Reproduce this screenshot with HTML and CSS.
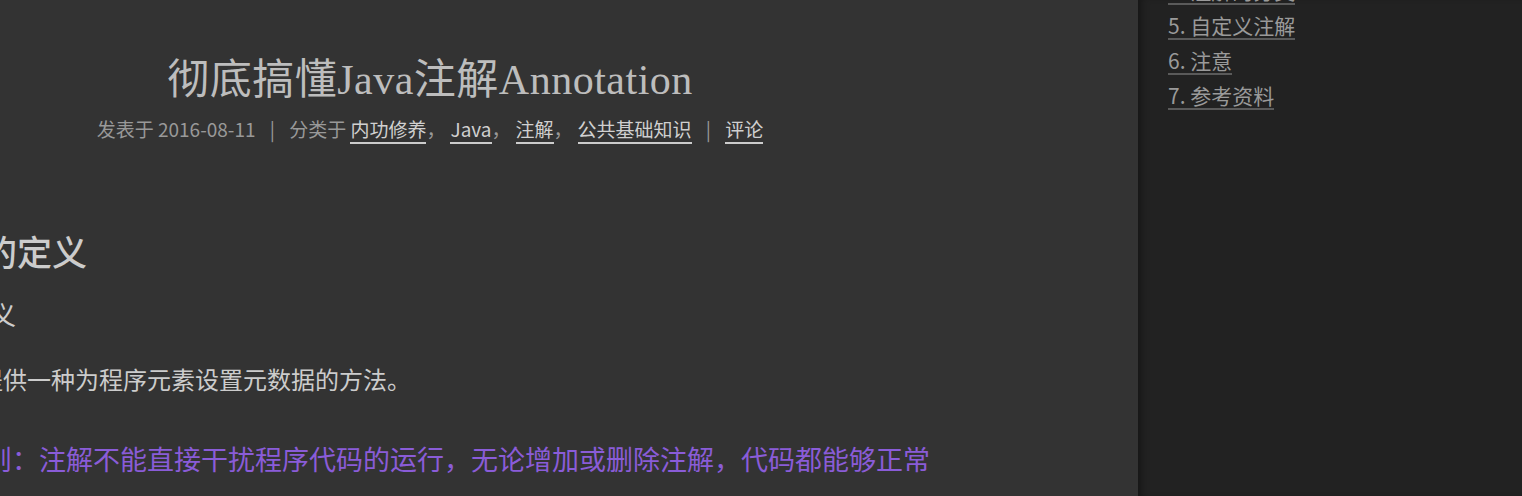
FILE: index.html
```html
<!DOCTYPE html>
<html lang="zh-CN">
<head>
<meta charset="utf-8">
<title>彻底搞懂Java注解Annotation</title>
<link rel="stylesheet" href="styles.css">
</head>
<body>
<div class="layout">
  <main class="main">
    <article class="post">
      <header class="post-header">
        <h1 class="post-title">彻底搞懂Java注解Annotation</h1>
        <div class="post-meta">
          <span class="meta-item">发表于 2016-08-11</span>
          <span class="meta-divider">|</span>
          <span class="meta-item">分类于 <a class="meta-link" href="#">内功修养</a><span class="comma">，</span><a class="meta-link" href="#">Java</a><span class="comma">，</span><a class="meta-link" href="#">注解</a><span class="comma">，</span><a class="meta-link" href="#">公共基础知识</a></span>
          <span class="meta-divider">|</span>
          <a class="meta-link" href="#">评论</a>
        </div>
      </header>
      <div class="post-body">
        <h2 class="body-h2">注解的定义</h2>
        <h3 class="body-h3">注解定义</h3>
        <p class="body-p">注解 - 提供一种为程序元素设置元数据的方法。</p>
        <blockquote class="note">原则：注解不能直接干扰程序代码的运行，无论增加或删除注解，代码都能够正常运行。</blockquote>
      </div>
    </article>
  </main>
  <aside class="sidebar">
    <ol class="toc">
      <li class="toc-item"><a class="toc-link" href="#">4. 注解的分类</a></li>
      <li class="toc-item"><a class="toc-link" href="#">5. 自定义注解</a></li>
      <li class="toc-item"><a class="toc-link" href="#">6. 注意</a></li>
      <li class="toc-item"><a class="toc-link" href="#">7. 参考资料</a></li>
    </ol>
  </aside>
</div>
</body>
</html>
```

FILE: styles.css
```css
html, body {
  margin: 0;
  padding: 0;
  height: 100%;
  background: #333333;
}

body {
  font-family: "Noto Sans CJK SC", "Noto Sans", sans-serif;
  overflow: hidden;
}

.layout {
  display: flex;
  height: 496px;
  overflow: hidden;
}

.main {
  flex: 0 0 1138px;
  width: 1138px;
  overflow: hidden;
  background: #333333;
}

.post {
  width: 1036px;
  margin-left: -88px;
}

.post-header {
  text-align: center;
  padding-top: 55px;
}

.post-title {
  margin: 0;
  font-family: "Liberation Serif", "Noto Sans CJK SC", serif;
  font-weight: normal;
  font-size: 42px;
  line-height: 50px;
  letter-spacing: 0.5px;
  color: #bdbdbd;
}

.post-meta {
  margin-top: 11px;
  font-size: 19px;
  line-height: 26px;
  color: #999999;
}

.meta-divider {
  margin: 0 10px;
}

.meta-link {
  color: #d0d0d0;
  text-decoration: none;
  border-bottom: 2px solid #cccccc;
}

.comma {
  margin-right: 5px;
}

.post-body {
  margin-top: 87px;
}

.body-h2 {
  margin: 0;
  font-size: 35px;
  line-height: 44px;
  font-weight: 500;
  color: #cccccc;
}

.body-h3 {
  margin: 24px 0 0;
  font-size: 26px;
  line-height: 34px;
  font-weight: normal;
  color: #cccccc;
}

.body-p {
  margin: 32px 0 0;
  font-size: 24px;
  line-height: 32px;
  color: #cccccc;
}

.note {
  margin: 39px 0 0 40px;
  padding: 0 0 0 6px;
  font-size: 27px;
  line-height: 50px;
  color: #8a5cd8;
}

.sidebar {
  flex: 1;
  background: #222222;
  box-shadow: inset 8px 0 10px -6px rgba(0, 0, 0, 0.45);
  overflow: hidden;
}

.toc {
  list-style: none;
  margin: -22px 0 0;
  padding: 0 0 0 30px;
}

.toc-item {
  height: 35px;
}

.toc-link {
  display: inline-block;
  font-size: 21px;
  line-height: 25px;
  color: #9a9a9a;
  text-decoration: none;
  border-bottom: 2px solid #5a5a5a;
}
```
